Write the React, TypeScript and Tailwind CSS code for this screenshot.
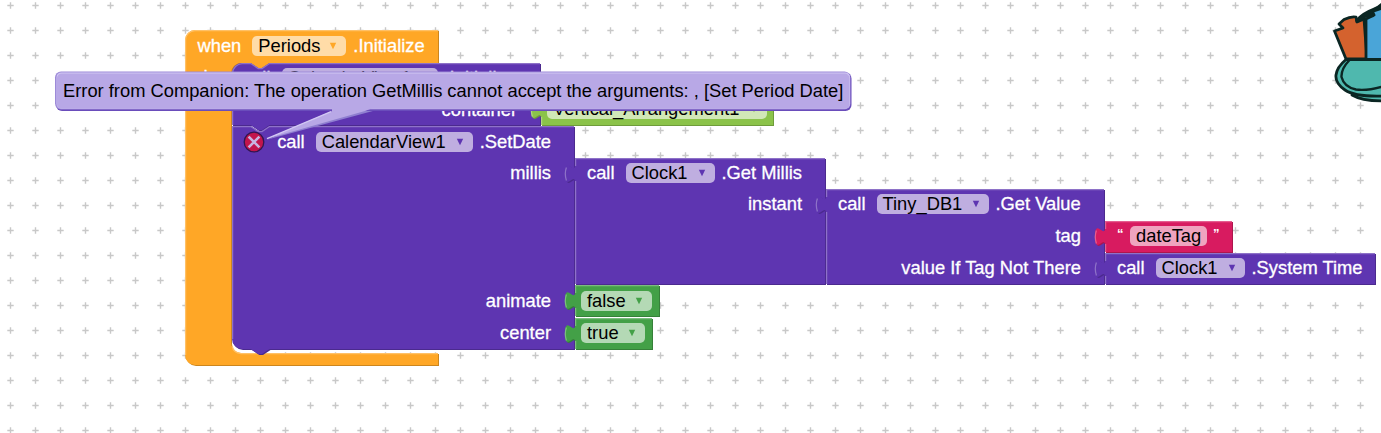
import type { ReactNode } from "react";

type Palette = { fill: string; light: string; dark: string; field: string };

const PURPLE: Palette = { fill: "#5e35b1", light: "#8e72c8", dark: "#4b2a8e", field: "#bfaee0" };
const LIME: Palette = { fill: "#8bc34a", light: "#aed580", dark: "#6f9c3b", field: "#d1e7b7" };
const GREEN: Palette = { fill: "#43a047", light: "#7bbd7e", dark: "#368039", field: "#b4d9b5" };
const PINK: Palette = { fill: "#d81b60", light: "#e45f90", dark: "#ad164d", field: "#efa4bf" };
const ORANGE: Palette = { fill: "#ffa726", light: "#ffc167", dark: "#cc861e", field: "#ffdca8" };

const TAB_UP = "C 0,12.5 -10,35 -10,15.6 C -10,-3.75 0,18.75 0,6.25";

/** Value block: rectangle with a puzzle tab on its left side. */
function valuePath(w: number, h: number) {
  return `M 0,0 H ${w} V ${h} H 0 V 25 ${TAB_UP} Z`;
}

/** Statement block: notch on top, bump at the bottom, optional rounded ends. */
function statementPath(w: number, h: number, top: number, bottom: number) {
  return (
    `M 0,${top} ${top ? `A ${top},${top} 0 0 1 ${top},0` : ""} H 18.75 l 7.5,5 3.75,0 7.5,-5 H ${w} V ${h} ` +
    `H 37.5 l -7.5,5 -3.75,0 -7.5,-5 H ${bottom} ${bottom ? `A ${bottom},${bottom} 0 0 1 0,${h - bottom}` : ""} Z`
  );
}

function Shape({ path, light, palette }: { path: string; light: string; palette: Palette }) {
  return (
    <svg className="absolute left-0 top-0 h-full w-full overflow-visible">
      <path d={path} fill={palette.dark} transform="translate(1,1)" />
      <path d={path} fill={palette.fill} />
      <path d={light} fill="none" stroke={palette.light} strokeWidth="1.25" />
    </svg>
  );
}

type NodeProps = {
  x: number;
  y: number;
  w: number;
  h: number;
  palette: Palette;
  children: ReactNode;
};

function ValueBlock({ x, y, w, h, palette, children }: NodeProps) {
  return (
    <div className="absolute" style={{ left: x, top: y, width: w, height: h }}>
      <Shape
        palette={palette}
        path={valuePath(w, h)}
        light={`M ${w},0.6 H 0.6 V 8 M -8.6,9.5 q -2.2,6 0,13 M 0.6,23 V ${h}`}
      />
      <div className="relative flex h-full flex-col">{children}</div>
    </div>
  );
}

function StatementBlock({ x, y, w, h, palette, children, top = 0, bottom = 0 }: NodeProps & { top?: number; bottom?: number }) {
  return (
    <div className="absolute" style={{ left: x, top: y, width: w, height: h }}>
      <Shape
        palette={palette}
        path={statementPath(w, h, top, bottom)}
        light={
          `M 0.6,${h - bottom} V ${top} ${top ? `A ${top},${top} 0 0 1 ${top},0.6` : "V 0.6"} ` +
          `H 18.75 l 7.5,5 3.75,0 7.5,-5 H ${w}`
        }
      />
      <div className="relative flex h-full flex-col">{children}</div>
    </div>
  );
}

function Label({ children }: { children: ReactNode }) {
  return <span className="text-white [-webkit-text-stroke:0.3px_white]">{children}</span>;
}

function Field({ text, w, palette, arrow = true }: { text: string; w: number; palette: Palette; arrow?: boolean }) {
  return (
    <span
      className="flex h-5 shrink-0 items-center justify-between rounded-[5px] pl-1.5 text-black"
      style={{ width: w, backgroundColor: palette.field }}
    >
      <span>{text}</span>
      {arrow && (
        <svg className="mr-[9px] h-2 w-2" viewBox="0 0 8 8">
          <path d="M0.8 0.8 H7.2 L4 7.2 Z" fill={palette.fill} />
        </svg>
      )}
    </span>
  );
}

/** "call Component.Method" heading of a method block. */
function CallRow({ field, w, method }: { field: string; w: number; method: string }) {
  return (
    <div className="flex h-5 items-center">
      <Label>call</Label>
      <span className="ml-[11px] mr-[7px] flex">
        <Field text={field} w={w} palette={PURPLE} />
      </span>
      <Label>{method}</Label>
    </div>
  );
}

function ArgRow({ name }: { name: string }) {
  return (
    <div className="flex h-5 items-center justify-end pr-[23px]">
      <Label>{name}</Label>
    </div>
  );
}

function EventBlock() {
  const path =
    "M 0,10 A 10,10 0 0 1 10,0 H 253 V 33 H 84.5 l -7.5,5 -3.75,0 -7.5,-5 H 56 A 10,10 0 0 0 46,43 " +
    "V 313 A 10,10 0 0 0 56,323 H 253 V 335 H 10 A 10,10 0 0 1 0,325 Z";
  return (
    <div className="absolute left-[185px] top-[30px] h-[335px] w-[253px]">
      <Shape
        palette={ORANGE}
        path={path}
        light="M 0.6,325 V 10 A 9.4,9.4 0 0 1 10,0.6 H 253 M 47,316 A 10,10 0 0 0 56,323.6 H 253"
      />
      <div className="relative flex flex-col gap-[11px] pl-[12.5px] pt-1.5">
        <div className="flex h-5 items-center">
          <Label>when</Label>
          <span className="ml-[11px] mr-[7px] flex">
            <Field text="Periods" w={94} palette={ORANGE} />
          </span>
          <Label>.Initialize</Label>
        </div>
        <div className="flex h-5 items-center">
          <Label>do</Label>
        </div>
      </div>
    </div>
  );
}

function ErrorBubble() {
  return (
    <div className="absolute left-[55px] top-[71px] h-10 w-[797px]">
      <svg className="absolute left-0 top-0 h-full w-full overflow-visible">
        <path d="M 281,39 L 211,68 L 318,39 Z" fill="#8f7fd0" transform="translate(0.8,0.8)" />
        <rect x="1" y="1.5" width="795.5" height="38.5" rx="6" fill="#6a4dbb" />
        <rect x="0" y="0.5" width="795.5" height="38" rx="6" fill="#9d8ad8" />
        <rect x="1.5" y="1.4" width="793.5" height="36.4" rx="5" fill="#d2c8f3" />
        <rect x="2" y="2.6" width="792.5" height="35.2" rx="4.5" fill="#b8a8e6" />
        <path d="M 277,37 L 277,40 L 211,68 L 310,40 L 318,37 Z" fill="#b8a8e6" />
        <path d="M 276,40.6 L 212,67.6" stroke="#d2c8f3" strokeWidth="1.2" />
      </svg>
      <div className="relative flex h-10 items-center pl-2 text-black">
        <span className="whitespace-nowrap text-[18.32px]">
          Error from Companion: The operation GetMillis cannot accept the arguments: , [Set Period Date]
        </span>
      </div>
    </div>
  );
}

function ErrorIcon() {
  return (
    <svg className="h-[22px] w-[22px] shrink-0" viewBox="0 0 22 22">
      <circle cx="11" cy="11" r="9.8" fill="#c2154c" stroke="#321550" strokeWidth="1.3" />
      <path d="M5.6 5.6 L16.4 16.4 M16.4 5.6 L5.6 16.4" stroke="#c8b4e2" strokeWidth="2.6" />
    </svg>
  );
}

function Backpack() {
  return (
    <svg className="absolute right-0 top-0 h-[110px] w-[51px]" viewBox="1330 0 51 110">
      <g stroke="#0b2623" strokeWidth="2.8" strokeLinejoin="round">
        <path d="M1352 95 Q1362 101 1384 101 V92 H1356 Z" fill="#4fb8ae" />
        <path d="M1346 59 L1334.5 31 L1343 28 L1339 24 L1344 19.5 Q1351 16 1356 17 L1357 22 L1364 19 L1367 59 Z" fill="#d4622e" />
        <path d="M1366 60 L1366 19 L1374 15 L1372 11 L1384 4 V60 Z" fill="#4aa5d8" />
        <path d="M1346 59.5 H1384 V96 Q1355 97 1345 90 Q1335 83 1336 75 Q1337 67 1346 59.5 Z" fill="#4fb8ae" />
        <path d="M1349.5 60 Q1341 69 1341.5 77 Q1344 87 1356 89.5 Q1368 91 1384 86" fill="none" strokeWidth="2.4" />
      </g>
      <path d="M1355 20 Q1362 12 1373 8 Q1378 6 1381 3 V10 L1372 13 L1374 17 L1365 18 L1356 23 Z" fill="#0b2623" />
    </svg>
  );
}

export default function App() {
  return (
    <main className="relative h-[433px] w-[1381px] overflow-hidden whitespace-nowrap bg-white font-['Liberation_Sans',Arial,sans-serif] text-[18.33px] leading-5">
      <svg className="absolute left-0 top-0 h-full w-full">
        <defs>
          <pattern id="grid" x="-2" y="-7" width="25" height="25" patternUnits="userSpaceOnUse">
            <path d="M9.3 12.5 H15.7 M12.5 9.3 V15.7" stroke="#c8c8c8" strokeWidth="1.4" />
          </pattern>
        </defs>
        <rect width="1381" height="433" fill="url(#grid)" />
      </svg>
      <Backpack />

      <EventBlock />

      <StatementBlock x={232} y={63} w={308} h={62} palette={PURPLE} top={10}>
        <div className="flex flex-col gap-3 pt-[5px]">
          <div className="pl-[11px]">
            <CallRow field="CalendarView1" w={156} method=".Initialize" />
          </div>
          <ArgRow name="container" />
        </div>
      </StatementBlock>
      <ValueBlock x={541} y={94} w={232} h={31} palette={LIME}>
        <div className="pl-1.5 pt-[5px]">
          <Field text="Vertical_Arrangement1" w={220} palette={LIME} />
        </div>
      </ValueBlock>

      <StatementBlock x={232} y={126} w={342} h={223} palette={PURPLE} bottom={10}>
        <div className="flex items-center justify-end pr-[23px] pt-1.5">
          <div className="mr-3 flex h-5 items-center">
            <ErrorIcon />
          </div>
          <CallRow field="CalendarView1" w={157} method=".SetDate" />
        </div>
        <div className="h-[128px] pt-[11px]">
          <ArgRow name="millis" />
        </div>
        <div className="flex flex-col gap-3 pt-[11px]">
          <ArgRow name="animate" />
          <ArgRow name="center" />
        </div>
      </StatementBlock>

      <ValueBlock x={575} y={158} w={250} h={126} palette={PURPLE}>
        <div className="pl-3 pt-[5px]">
          <CallRow field="Clock1" w={89} method=".Get Millis" />
        </div>
        <div className="pt-[11px]">
          <ArgRow name="instant" />
        </div>
      </ValueBlock>

      <ValueBlock x={826} y={189} w={278} h={95} palette={PURPLE}>
        <div className="pl-3 pt-[5px]">
          <CallRow field="Tiny_DB1" w={112} method=".Get Value" />
        </div>
        <div className="flex flex-col gap-3 pt-3">
          <ArgRow name="tag" />
          <ArgRow name="value If Tag Not There" />
        </div>
      </ValueBlock>

      <ValueBlock x={1105} y={221} w={127} h={31} palette={PINK}>
        <div className="flex items-start pl-3 pt-[5px]">
          <span className="w-[13px] text-[13px] font-bold leading-4 text-white">“</span>
          <Field text="dateTag" w={77} palette={PINK} arrow={false} />
          <span className="ml-1.5 text-[13px] font-bold leading-4 text-white">”</span>
        </div>
      </ValueBlock>

      <ValueBlock x={1105} y={253} w={270} h={31} palette={PURPLE}>
        <div className="pl-3 pt-[5px]">
          <CallRow field="Clock1" w={89} method=".System Time" />
        </div>
      </ValueBlock>

      <ValueBlock x={575} y={285} w={84} h={31} palette={GREEN}>
        <div className="pl-1.5 pt-1.5">
          <Field text="false" w={71} palette={GREEN} />
        </div>
      </ValueBlock>
      <ValueBlock x={575} y={318} w={77} h={31} palette={GREEN}>
        <div className="pl-1.5 pt-[5px]">
          <Field text="true" w={64} palette={GREEN} />
        </div>
      </ValueBlock>

      <ErrorBubble />
    </main>
  );
}
